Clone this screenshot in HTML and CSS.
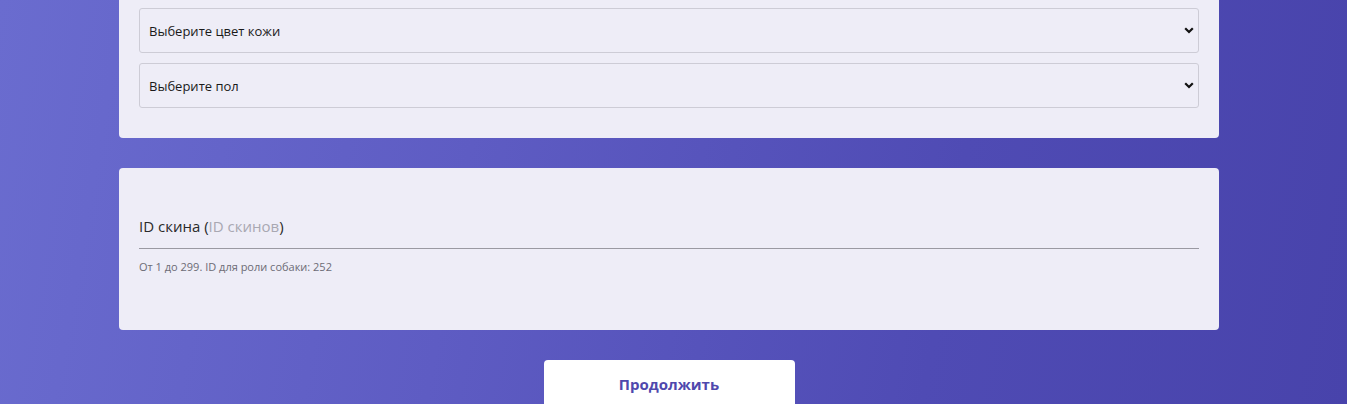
FILE: index.html
```html
<!DOCTYPE html>
<html lang="ru">
<head>
    <meta charset="UTF-8">
    <meta name="viewport" content="width=device-width, initial-scale=1.0">
    <title>Создание персонажа</title>
    <link rel="stylesheet" href="styles.css">
</head>
<body>
    <div class="page">
        <div class="card card-top">
            <div class="select-wrap">
                <select class="select">
                    <option>Выберите цвет кожи</option>
                </select>
                <svg class="chevron" width="10" height="7" viewBox="0 0 10 7"><path d="M1.2 1.2 L5 5 L8.8 1.2" fill="none" stroke="#111" stroke-width="2.2"/></svg>
            </div>
            <div class="select-wrap">
                <select class="select">
                    <option>Выберите пол</option>
                </select>
                <svg class="chevron" width="10" height="7" viewBox="0 0 10 7"><path d="M1.2 1.2 L5 5 L8.8 1.2" fill="none" stroke="#111" stroke-width="2.2"/></svg>
            </div>
        </div>

        <div class="card card-skin">
            <label class="field-label">ID скина (<span class="hint">ID скинов</span>)</label>
            <div class="field-line"></div>
            <div class="helper">От 1 до 299. ID для роли собаки: 252</div>
        </div>

        <button class="next-btn">Продолжить</button>
    </div>
</body>
</html>
```

FILE: styles.css
```css
html, body {
    height: 100%;
}

body {
    margin: 0;
    padding-right: 9px;
    overflow: hidden;
    font-family: "Open Sans", "Noto Sans", sans-serif;
    background: linear-gradient(100deg, #6a6ccf 0%, #5e5cc3 35%, #4f4bb4 70%, #4843ab 100%);
}

.page {
    width: 1100px;
    margin: 0 auto;
    display: flex;
    flex-direction: column;
    align-items: center;
}

.card {
    width: 100%;
    box-sizing: border-box;
    background: #eeedf7;
    border-radius: 4px;
}

.card-top {
    margin-top: -12px;
    padding: 20px 20px 30px;
    display: flex;
    flex-direction: column;
    gap: 10px;
}

.select-wrap {
    position: relative;
}

.select {
    appearance: none;
    -webkit-appearance: none;
    width: 100%;
    height: 45px;
    padding: 0 9px;
    border: 1px solid #cdccd6;
    border-radius: 3px;
    background: #eeedf7;
    font-family: "Open Sans", "Noto Sans", sans-serif;
    font-size: 13px;
    color: #1a1a1a;
    outline: none;
}

.chevron {
    position: absolute;
    right: 5px;
    top: 19px;
}

.card-skin {
    margin-top: 30px;
    height: 162px;
    padding: 48px 20px 0;
}

.field-label {
    display: block;
    font-size: 15px;
    color: #2a2a2a;
    line-height: 20px;
}

.hint {
    color: #a9a8b2;
}

.field-line {
    margin-top: 12px;
    height: 1px;
    background: #9a99a2;
}

.helper {
    margin-top: 10px;
    font-size: 11px;
    color: #6c6b75;
}

.next-btn {
    margin-top: 30px;
    width: 251px;
    height: 48px;
    border: none;
    border-radius: 4px;
    background: #ffffff;
    color: #4f48ad;
    font-family: "Open Sans", "Noto Sans", sans-serif;
    font-size: 15px;
    font-weight: 700;
    cursor: pointer;
}
```
